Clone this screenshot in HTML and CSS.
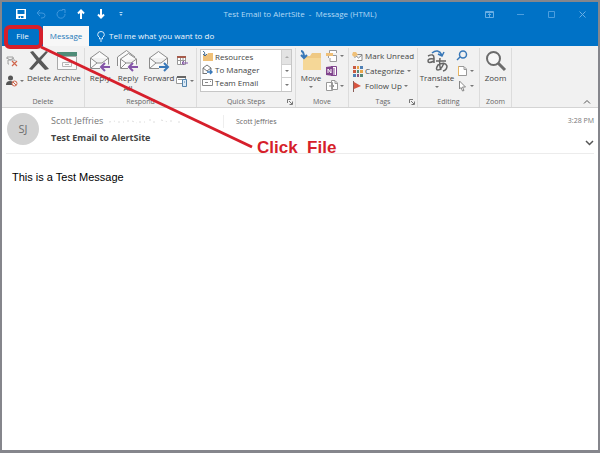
FILE: index.html
```html
<!DOCTYPE html>
<html lang="en">
<head>
<meta charset="utf-8">
<title>Test Email to AlertSite - Message (HTML)</title>
<link rel="stylesheet" href="styles.css">
</head>
<body>
<div class="window">
  <header class="titlebar">
    <div class="quick">
      <button aria-label="Save"><svg width="10" height="10" viewBox="0 0 10 10"><path fill="#fff" fill-rule="evenodd" d="M0 0H10V10H0ZM1.500 1V5H8.500V1ZM2.500 7V9H4V7.500H5V9H7.500V7Z"/></svg></button>
      <button aria-label="Undo"><svg width="10" height="10" viewBox="0 0 10 10" fill="none" stroke="#3f97dc"><path d="M4 1L1 4L4 7M1 4H6Q9 4 9 6.500T6 9H5"/></svg></button>
      <button aria-label="Redo"><svg width="10" height="10" viewBox="0 0 10 10" fill="none" stroke="#3f97dc"><path d="M6.500 1.500A4 4 0 1 0 9 5M6 .500H9V4"/></svg></button>
      <button aria-label="Previous item"><svg width="10" height="10" viewBox="0 0 10 10" fill="none" stroke="#fff" stroke-width="2"><path d="M5 10V1.500M2 4.500L5 1.500L8 4.500"/></svg></button>
      <button aria-label="Next item"><svg width="10" height="10" viewBox="0 0 10 10" fill="none" stroke="#fff" stroke-width="2"><path d="M5 0V8.500M2 5.500L5 8.500L8 5.500"/></svg></button>
      <button aria-label="Customize"><svg width="10" height="10" viewBox="0 0 10 10" fill="#b5d8f2"><path d="M3.500 3H6.500V4H3.500ZM3.500 5H6.500L5 7Z"/></svg></button>
    </div>
    <h1>Test Email to AlertSite&nbsp; -&nbsp; Message (HTML)</h1>
    <div class="controls">
      <button aria-label="Ribbon options"><svg width="9" height="9" viewBox="0 0 9 9" fill="none" stroke="#69aee4"><path d="M.5 1.500H8.500V7.500H.5ZM.5 2.500H8.500M4.500 7V4M3 5L4.500 3.500L6 5"/></svg></button>
      <button aria-label="Minimize"><svg width="9" height="9" viewBox="0 0 9 9" stroke="#4c9ede"><path d="M1 4.500H8"/></svg></button>
      <button aria-label="Maximize"><svg width="9" height="9" viewBox="0 0 9 9" fill="none" stroke="#4c9ede"><path d="M1.500 1.500H7.500V7.500H1.500Z"/></svg></button>
      <button aria-label="Close"><svg width="9" height="9" viewBox="0 0 9 9" stroke="#69aee4"><path d="M1.500 1.500L7.500 7.500M7.500 1.500L1.500 7.500"/></svg></button>
    </div>
  </header>

  <nav class="tabs">
    <button class="tab file">File</button>
    <button class="tab active">Message</button>
    <button class="tab tell"><svg width="8" height="11" viewBox="0 0 8 11" fill="none" stroke="#d8ebfa"><path d="M2.500 8V6.500Q.500 5 .700 3.500A3.300 3 0 0 1 7.300 3.500Q7.500 5 5.500 6.500V8ZM3 10H5"/></svg>Tell me what you want to do</button>
  </nav>

  <section class="ribbon">
    <div class="group g-delete">
      <div class="tools">
        <div class="stack two">
          <button aria-label="Clean up"><svg width="12" height="12" viewBox="0 0 12 12" fill="none" stroke="#a0a0a0"><path d="M1 4V2H7V4M1 3L4 5L8 3M3 9H2V5H9V6"/><path stroke="#d0664c" stroke-width="1.200" d="M6 6L11 11M11 6L6 11"/></svg></button>
          <button aria-label="Junk"><svg width="12" height="12" viewBox="0 0 12 12"><circle cx="4.500" cy="3" r="2.500" fill="#555"/><path fill="#555" d="M0 10Q0 6 4 6T8 10Z"/><circle cx="8.500" cy="8.500" r="2.500" fill="#f1f1f1" stroke="#d0664c"/><path stroke="#d0664c" d="M7 7L10 10"/></svg><i class="caret"></i></button>
        </div>
        <button class="big"><svg width="22" height="22" viewBox="0 0 22 22"><path fill="#595959" d="M2 2L5 1L11 8L18 1L20 2L13 10L21 19L17 20L10.500 13L4 20L1 19L8.500 10.500Z"/></svg>Delete</button>
        <button class="big"><svg width="22" height="22" viewBox="0 0 22 22"><path fill="#fafafa" stroke="#aaa" d="M1.500 6.500H20.500V19.500H1.500Z"/><path fill="#4f8c78" d="M1 2H21V6H1Z"/><path fill="none" stroke="#b5b5b5" d="M6.500 12.500H15.500V16.500H6.500ZM9 14.500H13"/></svg>Archive</button>
      </div>
      <div class="caption">Delete</div>
    </div>

    <div class="group g-respond">
      <div class="tools">
        <button class="big reply"><svg width="22" height="22" viewBox="0 0 22 22"><path fill="#fafafa" stroke="#8c8c8c" d="M1.500 18.500V8L10.500 1.500L19.500 8V18.500ZM1.500 8L8 13H13L19.500 8M2 18L8 13"/><path stroke="#f1f1f1" stroke-width="5" d="M11 17H22"/><path fill="none" stroke="#8454a8" stroke-width="2" d="M21 17H12M16 13L12 17L16 21"/></svg>Reply</button>
        <button class="big reply"><svg width="22" height="22" viewBox="0 0 22 22"><path fill="#fafafa" stroke="#8c8c8c" d="M.5 16V7L9.500 .5L18 7M3.500 18.500V9L11.500 3.500L19.500 9V18.500ZM3.500 9L9 13H14L19.500 9M4 18L9 13"/><path stroke="#f1f1f1" stroke-width="5" d="M11 17H22"/><path fill="none" stroke="#8454a8" stroke-width="2" d="M21 17H12M16 13L12 17L16 21"/></svg>Reply<br>All</button>
        <button class="big forward"><svg width="22" height="22" viewBox="0 0 22 22"><path fill="#fafafa" stroke="#8c8c8c" d="M1.500 18.500V8L10.500 1.500L19.500 8V18.500ZM1.500 8L8 13H13L19.500 8M2 18L8 13"/><path stroke="#f1f1f1" stroke-width="5" d="M11 17H22"/><path fill="none" stroke="#3978b8" stroke-width="2" d="M11 17H20M16 13L20 17L16 21"/></svg>Forward</button>
        <div class="stack two">
          <button aria-label="Meeting"><svg width="12" height="12" viewBox="0 0 12 12"><path fill="#fff" stroke="#999" d="M1.500 1.500H9.500V9.500H1.500ZM1 5.500H10M4.500 3V9M7 3V9"/><path fill="#a75b4b" d="M1 1H10V3H1Z"/><path fill="none" stroke="#8454a8" d="M12 8H6M8 6L6 8L8 10"/></svg></button>
          <button aria-label="More responses"><svg width="12" height="12" viewBox="0 0 12 12"><path fill="#fff" stroke="#999" d="M.5 2.500H9.500V8.500H.5ZM2 4.500H7"/><path fill="#666" d="M1 1H10V3H1Z"/><path fill="#dceaf6" stroke="#5282ab" d="M6.500 4.500H10.500V11.500H6.500ZM8 7H9"/></svg><i class="caret"></i></button>
        </div>
      </div>
      <div class="caption">Respond</div>
    </div>

    <div class="group g-steps">
      <div class="tools">
        <div class="gallery">
          <div class="steps">
            <button><svg width="11" height="11" viewBox="0 0 11 11"><path fill="#efc078" d="M1 4H5L6 2H11V10H1Z"/><path fill="none" stroke="#456b91" d="M1 0Q3 0 3 5M1 3L3 5L5 3"/></svg>Resources</button>
            <button><svg width="11" height="11" viewBox="0 0 11 11" fill="none" stroke="#777"><path d="M1 10V4L5 1L9 4V6M1 4L5 7L9 4M1 9.500H5"/><path stroke="#3978b8" stroke-width="1.500" d="M5 8H10M8 6L10 8L8 10"/></svg>To Manager</button>
            <button><svg width="11" height="11" viewBox="0 0 11 11" fill="#fff" stroke="#888"><path d="M.5 2.500H10.500V8.500H.5ZM3 5.500H6M8 4.500H9"/></svg>Team Email</button>
          </div>
          <div class="scroll">
            <button class="off" aria-label="Up"><i class="caret up"></i></button>
            <button aria-label="Down"><i class="caret"></i></button>
            <button aria-label="More"><i class="caret more"></i></button>
          </div>
        </div>
      </div>
      <div class="caption">Quick Steps<svg class="launch" width="6" height="6" viewBox="0 0 6 6" fill="none" stroke="#777"><path d="M.5 4V.5H4M2 2L5 5M5.500 2.500V5.500H2.500"/></svg></div>
    </div>

    <div class="group g-move">
      <div class="tools">
        <button class="big"><svg width="22" height="22" viewBox="0 0 22 22"><path fill="#efc984" d="M3 6H10L12 3H21V20H3Z"/><path fill="#f5d797" d="M3 8H21V20H3Z"/><path fill="none" stroke="#3978b8" stroke-width="2" d="M1 1Q4 1 4 8M1 5L4 8L7 5"/></svg>Move<i class="caret"></i></button>
        <div class="stack three">
          <button aria-label="Rules"><svg width="12" height="12" viewBox="0 0 12 12"><path fill="#fff" stroke="#999" d="M3.500 3V.5H10.500V3M2.500 8V5.500H10.500V11.500H4V8"/><path fill="#efc078" d="M0 3H7V6H0Z"/></svg><i class="caret"></i></button>
          <button aria-label="OneNote"><svg width="12" height="12" viewBox="0 0 12 12"><path fill="#fff" stroke="#81458d" d="M5 1.500H10.500V10.500H5M8 3V10"/><path fill="#81458d" d="M0 2L7 1V11L0 10Z"/><path fill="none" stroke="#fff" d="M2 8V4L5 8V4"/></svg></button>
          <button aria-label="Actions"><svg width="12" height="12" viewBox="0 0 12 12" fill="#fff" stroke="#999"><path d="M.5 2.500H6.500V10.500H.5ZM5.500 .5H9L11.500 3V9.500H5.500ZM9 1V3.500H11M3 6H8M6 4L8 6L6 8"/></svg><i class="caret"></i></button>
        </div>
      </div>
      <div class="caption">Move</div>
    </div>

    <div class="group g-tags">
      <div class="tools">
        <div class="stack three">
          <button><svg width="11" height="11" viewBox="0 0 11 11"><path fill="#fff" stroke="#888" d="M3 7V3.500H10V9.500H5M3 4L6.500 7L10 4"/><path fill="#efc078" d="M0 4L1 1H4L6 4L2 6Z"/></svg>Mark Unread</button>
          <button><svg width="11" height="11" viewBox="0 0 11 11"><path fill="#c85a43" d="M1 0H4V3H1ZM1 4H4V7H1Z"/><path fill="#e8a449" d="M5 0H7V3H5ZM8 4H11V7H8Z"/><path fill="#4e80b5" d="M8 0H11V3H8ZM1 8H4V11H1Z"/><path fill="#568875" d="M5 4H7V7H5ZM8 8H11V11H8Z"/><path fill="#8c557f" d="M5 8H7V11H5Z"/></svg>Categorize<i class="caret"></i></button>
          <button><svg width="11" height="11" viewBox="0 0 11 11"><path fill="#d75440" d="M2 1L9 5L2 8Z"/><path stroke="#8c5d57" d="M1.500 0V11"/></svg>Follow Up<i class="caret"></i></button>
        </div>
      </div>
      <div class="caption">Tags<svg class="launch" width="6" height="6" viewBox="0 0 6 6" fill="none" stroke="#777"><path d="M.5 4V.5H4M2 2L5 5M5.500 2.500V5.500H2.500"/></svg></div>
    </div>

    <div class="group g-editing">
      <div class="tools">
        <button class="big"><svg width="22" height="22" viewBox="0 0 22 22" fill="none" stroke="#666" stroke-width="1.500"><path d="M2 6Q8 3 8 8V13M8 9Q2 8 2 11T8 11"/><path d="M10 11H20M14 8Q13 16 15 20M18 13Q15 20 12 20T12 15Q19 11 21 16Q21 20 17 21"/><path stroke="#3978b8" stroke-width="1.500" d="M6 3Q12-2 16 5M12 4L16 6L18 2"/></svg>Translate<i class="caret"></i></button>
        <div class="stack three">
          <button aria-label="Find"><svg width="12" height="12" viewBox="0 0 12 12" fill="none" stroke="#3978b8" stroke-width="1.500"><circle cx="7" cy="4.500" r="3.500"/><path d="M4 7L1 10"/></svg></button>
          <button aria-label="Related"><svg width="12" height="12" viewBox="0 0 12 12"><path fill="#fff" stroke="#999" d="M2.500 1.500H8L10.500 4V10.500H2.500ZM8 2V4.500H10"/><path stroke="#e8b45e" d="M2.500 1V11"/></svg><i class="caret"></i></button>
          <button aria-label="Select"><svg width="12" height="12" viewBox="0 0 12 12"><path fill="#fff" stroke="#888" d="M3.500 1L9.500 7H6.500L8 10.500L6.500 11L5 7.500L3.500 9Z"/></svg><i class="caret"></i></button>
        </div>
      </div>
      <div class="caption">Editing</div>
    </div>

    <div class="group g-zoom">
      <div class="tools">
        <button class="big"><svg width="22" height="22" viewBox="0 0 22 22" fill="none" stroke="#6c6c6c"><circle cx="8.500" cy="8.500" r="6.500" fill="#f7f7f7" stroke-width="2"/><path stroke-width="3" d="M13 13L20 20"/></svg>Zoom</button>
      </div>
      <div class="caption">Zoom</div>
    </div>
    <button class="collapse" aria-label="Collapse ribbon"><svg width="8" height="8" viewBox="0 0 8 8" fill="none" stroke="#555"><path d="M1 5.500L4 2.500L7 5.500"/></svg></button>
  </section>

  <main>
    <div class="message-head">
      <div class="avatar">SJ</div>
      <div class="who">
        <div class="from">Scott Jeffries <svg width="76" height="8" viewBox="0 0 76 8" fill="none" stroke="#dedede"><path stroke-dasharray="2 3 1 2" d="M1 5L8 4M10 5H18M20 3V6M24 4L29 6M31 5H39M42 2V6M45 5H50M53 3L60 5M62 4H66M70 5H75"/></svg></div>
        <h2>Test Email to AlertSite</h2>
      </div>
      <div class="to">Scott Jeffries</div>
      <div class="when"><time>3:28 PM</time><button aria-label="Expand header"><svg width="9" height="8" viewBox="0 0 9 8" fill="none" stroke="#555" stroke-width="1.500"><path d="M1 2L4.500 5.500L8 2"/></svg></button></div>
    </div>
    <p class="body">This is a Test Message</p>
  </main>
</div>

<div class="callout">
  <svg width="256" height="152" viewBox="0 0 256 152" fill="none" stroke="#d61f2b"><rect x="6" y="27" width="35" height="20" rx="4" stroke-width="4"/><path stroke-width="3" d="M41 47L252 147"/></svg>
  <strong>Click&nbsp; File</strong>
</div>
</body>
</html>
```

FILE: styles.css
```css
* { box-sizing: border-box; }

body {
  margin: 0;
  font: 8px/10px "Open Sans", "Noto Sans", sans-serif;
  color: #444;
}

button {
  display: flex;
  align-items: center;
  padding: 0;
  border: 0;
  background: none;
  color: inherit;
  font: inherit;
  white-space: nowrap;
}

svg { flex: none; display: block; }

h1, h2, p { margin: 0; }

.window {
  display: flex;
  flex-direction: column;
  min-height: 100vh;
  border: 2px solid #85868c;
  border-bottom-width: 3px;
  background: #fff;
}

.titlebar {
  display: grid;
  grid-template-columns: 1fr auto 1fr;
  align-items: center;
  height: 24px;
  background: #0072c6;
}

.quick { display: flex; gap: 10px; padding-left: 14px; }

.titlebar h1 { font-size: 8px; font-weight: 400; color: #b5daf5; }

.controls { display: flex; justify-content: flex-end; gap: 22px; padding-right: 11px; }

.tabs { display: flex; height: 20px; background: #0072c6; color: #f0f7fd; }
.tab { justify-content: center; }
.tab.file { width: 41px; }
.tab.active { width: 46px; background: #f7f7f7; color: #2479b9; }
.tab.tell { gap: 4px; padding-left: 8px; }

.ribbon {
  display: flex;
  height: 62px;
  background: #f1f1f1;
  border-bottom: 1px solid #d4d4d4;
}

.group {
  display: flex;
  flex-direction: column;
  margin: 2px 0 0;
  border-right: 1px solid #dcdcdc;
}
.g-delete { width: 83px; }
.g-respond { width: 112px; }
.g-steps { width: 99px; }
.g-move { width: 53px; }
.g-tags { width: 69px; }
.g-editing { width: 62px; }
.g-zoom { width: 32px; }

.tools { display: flex; height: 49px; }

.caption {
  position: relative;
  text-align: center;
  font-size: 7px;
  color: #666;
}
.launch { position: absolute; right: 2px; top: 2px; }

.big {
  flex-direction: column;
  width: 28px;
  padding-top: 2px;
  text-align: center;
}
.big svg { margin-bottom: 1px; }
.big .caret { margin: 3px 0 0; }
.big.forward { width: 34px; }
.g-respond .tools { padding-left: 1px; }
.g-move .big { width: 30px; }
.g-editing .big { width: 38px; }
.g-zoom .big { width: 31px; }

.stack { display: flex; flex-direction: column; }
.stack.two { gap: 8px; padding-top: 7px; }
.stack.three { gap: 3px; padding-top: 2px; }
.stack button { height: 12px; }
.g-delete .stack { width: 23px; padding-left: 4px; }
.g-tags .stack { padding-left: 3px; }
.g-tags .stack svg { margin-right: 2px; }

.caret {
  width: 4px;
  margin-left: 3px;
  border: solid transparent;
  border-width: 2px 2px 0;
  border-top-color: #777;
}
.stack .caret { margin-left: 2px; }
.caret.up { border-width: 0 2px 2px; border-bottom-color: #aaa; }
.scroll .caret { margin: 0; }

.gallery {
  display: flex;
  width: 92px;
  height: 43px;
  margin: 1px 0 0 3px;
  border: 1px solid #c6c6c6;
  background: #fff;
}
.steps { flex: 1; }
.steps button { height: 13px; gap: 2px; padding-left: 1px; }
.scroll { display: grid; grid-template-rows: repeat(3, 1fr); width: 10px; border-left: 1px solid #d0d0d0; }
.scroll button { justify-content: center; }
.scroll button + button { border-top: 1px solid #d0d0d0; }
.scroll .off { background: #e3e3e3; }

.collapse { margin: auto 7px 1px auto; }

.message-head {
  display: flex;
  height: 46px;
  margin: 0 4px;
  border-bottom: 1px solid #ececec;
}

.avatar {
  width: 32px;
  height: 32px;
  margin: 5px 12px 0 1px;
  border-radius: 50%;
  background: #d2d2d2;
  color: #6f6f6f;
  font-size: 11px;
  line-height: 32px;
  text-align: center;
}

.who { width: 172px; padding-top: 4px; font-size: 9px; line-height: 17px; }
.from { display: flex; align-items: center; gap: 5px; color: #777; }
.who h2 { font-size: 9px; font-weight: 700; color: #444; }

.to {
  height: 13px;
  margin-top: 7px;
  padding-left: 12px;
  border-left: 1px solid #eee;
  font-size: 7px;
  line-height: 13px;
  color: #666;
}

.when {
  display: flex;
  flex-direction: column;
  align-items: flex-end;
  gap: 13px;
  margin-left: auto;
  padding-top: 8px;
  font-size: 7px;
  color: #777;
}

.body {
  padding: 16px 10px;
  color: #000;
  font: 11px/14px "Liberation Sans", Arial, sans-serif;
}

.callout { position: absolute; left: 0; top: 0; pointer-events: none; }
.callout strong {
  position: absolute;
  left: 257px;
  top: 138px;
  color: #d61f2b;
  font: bold 17px/20px "Liberation Sans", Arial, sans-serif;
  white-space: nowrap;
}
```
